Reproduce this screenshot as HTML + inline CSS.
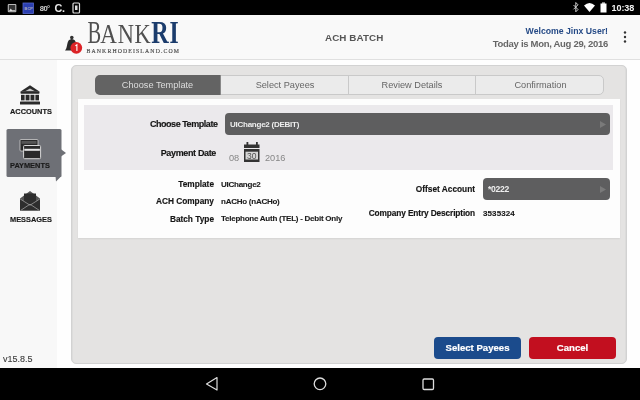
<!DOCTYPE html>
<html><head><meta charset="utf-8">
<style>
*{margin:0;padding:0;box-sizing:border-box}
html,body{width:640px;height:400px;overflow:hidden;will-change:transform;background:#fefefe;font-family:"Liberation Sans",sans-serif}
.abs{position:absolute}
#status{left:0;top:0;width:640px;height:15px;background:#000}
#header{left:0;top:15px;width:640px;height:45px;background:#f9f9f9;border-bottom:1px solid #e0e0e0}
#sidebar{left:0;top:60px;width:57px;height:308px;background:#f8f8f8}
#panel{left:71px;top:65px;width:556px;height:299px;background:#e4e3e2;border:1px solid #d2d2d2;border-radius:5px;box-shadow:inset 1px 0 0 #dcdcdb,inset -1px 0 0 #dcdcdb}
#nav{left:0;top:368px;width:640px;height:32px;background:#000}
.t{position:absolute;white-space:nowrap;line-height:1}
.lbl{font-weight:bold;font-size:8.3px;color:#151515;text-align:right;-webkit-text-stroke:0.15px #151515}
.val{font-weight:bold;font-size:8px;color:#1a1a1a;letter-spacing:-0.25px;-webkit-text-stroke:0.1px #1a1a1a}
.tabs{left:95px;top:75px;width:509px;height:20px;border:1px solid #c9c9c9;border-radius:5px;background:#ebebeb}
.tab{position:absolute;top:0;height:18px;font-size:9.2px;color:#666;text-align:center;line-height:18px;border-right:1px solid #c9c9c9}
.dd{position:absolute;background:#5e5e5f;border-radius:4px;color:#eee;font-weight:bold;font-size:8px}
.btn{position:absolute;top:337px;width:87px;height:22px;border-radius:4px;color:#fff;font-weight:bold;font-size:9.6px;text-align:center;line-height:22px;-webkit-text-stroke:0.2px #fff}
</style></head><body>
<div id="status" class="abs">
  <!-- left icons -->
  <svg class="abs" style="left:0;top:0" width="90" height="15">
    <rect x="8.3" y="4.5" width="7.5" height="7.3" rx="0.5" fill="#333" stroke="#b8b8b8" stroke-width="1.1"/>
    <path d="M8.8 11.3 L10.8 8.6 L12 10.2 L15.3 10.2 L15.3 11.3 Z" fill="#e0e0e0"/>
    <rect x="23" y="3" width="10.5" height="10.5" fill="#2b3fb0" stroke="#5566cc" stroke-width="0.8"/>
    <text x="24.5" y="10" font-size="4" fill="#aab" font-family="Liberation Sans" font-weight="bold">BCP</text>
    <text x="39.8" y="11.4" font-size="7.6" fill="#d0d0d0" font-family="Liberation Sans" font-weight="bold" letter-spacing="-0.6">80°</text>
    <text x="54.6" y="12.2" font-size="10.8" fill="#e8e8e8" font-family="Liberation Sans" font-weight="bold" letter-spacing="-0.3">C.</text>
    <rect x="73" y="3" width="6.5" height="10" rx="1" fill="none" stroke="#ddd" stroke-width="1.2"/>
    <rect x="75" y="5.5" width="2.5" height="4.5" fill="#ddd"/>
  </svg>
  <svg class="abs" style="left:560px;top:0" width="80" height="15">
    <path d="M13.5 5 L18 9.5 L15.8 11.8 L15.8 2.5 L18 4.8 L13.5 9.3" fill="none" stroke="#e0e0e0" stroke-width="0.9"/>
    <path d="M24 5.5 Q29.5 0.5 35 5.5 L29.5 12 Z" fill="#fff"/>
    <rect x="40.5" y="3.5" width="6" height="9" fill="#fff"/>
    <rect x="42" y="2.5" width="3" height="1.2" fill="#fff"/>
    <text x="51.6" y="11.3" font-size="9" fill="#f4f4f4" font-family="Liberation Sans" font-weight="bold" letter-spacing="-0.1">10:38</text>
  </svg>
</div>

<div id="header" class="abs">
  <!-- bell -->
  <svg class="abs" style="left:60px;top:17px" width="30" height="24">
    <circle cx="11.8" cy="5.6" r="1.8" fill="#333"/>
    <path d="M5 18.5 Q6.5 17 7.3 12 Q8 7.2 11.8 7 Q15.5 7.2 16.3 12 L16.8 18.5 Z" fill="#2a2a2a"/>
    <circle cx="16.3" cy="15.8" r="5.9" fill="#dc2327"/>
    <path d="M15.4 13.8 L16.9 12.8 L16.9 19" fill="none" stroke="#fff" stroke-width="1.1"/>
  </svg>
  <svg class="abs" style="left:80px;top:0" width="110" height="44" font-family="Liberation Serif">
    <g transform="translate(7.6,28) scale(0.66,1)"><text font-size="31" fill="#505050">B</text></g>
    <g transform="translate(20.2,28) scale(0.86,1)"><text font-size="26.7" fill="#505050">A</text></g>
    <g transform="translate(37.8,28) scale(0.84,1)"><text font-size="26.7" fill="#505050">N</text></g>
    <g transform="translate(54.4,28) scale(0.84,1)"><text font-size="26.7" fill="#505050">K</text></g>
    <g transform="translate(71.2,28) scale(0.76,1)"><text font-size="31.8" font-weight="bold" fill="#1b3c6c">R</text></g>
    <g transform="translate(89.4,28) scale(0.74,1)"><text font-size="31.8" font-weight="bold" fill="#1b3c6c">I</text></g>
  </svg>
  <div class="t" style="left:86.5px;top:33.5px;font-family:'Liberation Serif',serif;font-size:5.8px;color:#4a4a4a;letter-spacing:1.12px;-webkit-text-stroke:0.15px #4a4a4a">BANKRHODEISLAND.COM</div>
  <div class="t" style="left:325px;top:18px;font-size:9.8px;font-weight:bold;color:#555;letter-spacing:0.1px">ACH BATCH</div>
  <div class="t" style="right:32px;top:11.6px;font-size:8.7px;font-weight:bold;color:#254a86">Welcome Jinx User!</div>
  <div class="t" style="right:32px;top:24px;font-size:9.5px;font-weight:bold;color:#666;letter-spacing:-0.3px">Today is Mon, Aug 29, 2016</div>
  <svg class="abs" style="left:622px;top:16px" width="6" height="12">
    <circle cx="3" cy="1.5" r="1.2" fill="#333"/><circle cx="3" cy="6" r="1.2" fill="#333"/><circle cx="3" cy="10.5" r="1.2" fill="#333"/>
  </svg>
</div>

<div id="sidebar" class="abs"></div>
<!-- sidebar items -->
<svg class="abs" style="left:18px;top:84px" width="24" height="22">
  <path d="M12 1.3 L2.2 7.8 L21.8 7.8 Z" fill="#2a2a2a"/>
  <path d="M12 4.6 L7.5 7 L16.5 7 Z" fill="#c8c8c8"/>
  <rect x="2.5" y="7.5" width="19" height="2.3" rx="0.8" fill="#2a2a2a"/>
  <rect x="3" y="10.8" width="3.6" height="5.6" fill="#2a2a2a"/>
  <rect x="7.6" y="10.8" width="3.9" height="5.6" fill="#2a2a2a"/>
  <rect x="12.5" y="10.8" width="3.9" height="5.6" fill="#2a2a2a"/>
  <rect x="17.4" y="10.8" width="3.6" height="5.6" fill="#2a2a2a"/>
  <rect x="2" y="17.5" width="20" height="3" rx="0.5" fill="#2a2a2a"/>
</svg>
<div class="t" style="left:10px;top:108px;font-size:7.4px;font-weight:bold;color:#1a1a1a;-webkit-text-stroke:0.15px #1a1a1a">ACCOUNTS</div>

<svg class="abs" style="left:0;top:125px" width="70" height="60">
  <rect x="6.5" y="4" width="55" height="48" rx="1.5" fill="#6e7076"/>
  <path d="M55.5 51 L61.5 51 L56 56.5 Z" fill="#6e7076"/>
  <path d="M61 24.3 L66 28 L61 31.6 Z" fill="#6e7076"/>
  <!-- cards -->
  <rect x="20" y="14.5" width="18" height="11.5" rx="1" fill="#2a2a2a" stroke="#cfcfcf" stroke-width="0.8"/>
  <rect x="21.5" y="16" width="15" height="2.8" fill="#555"/>
  <rect x="23.6" y="20.5" width="17" height="13.2" rx="1" fill="#2a2a2a" stroke="#d8d8d8" stroke-width="1"/>
  <rect x="24.3" y="23.8" width="15.6" height="2" fill="#e8e8e8"/>
</svg>
<div class="t" style="left:10px;top:162px;font-size:7.4px;font-weight:bold;color:#1a1a1a;-webkit-text-stroke:0.15px #1a1a1a">PAYMENTS</div>

<svg class="abs" style="left:18px;top:189px" width="24" height="24">
  <path d="M2 9.5 L12 2 L22 9.5 L22 21.5 L2 21.5 Z" fill="#555"/>
  <rect x="6" y="4.5" width="12" height="11" fill="#2e2e2e"/>
  <path d="M2 9.8 L12 16.5 L22 9.8 L22 21.5 L2 21.5 Z" fill="#2e2e2e"/>
  <path d="M2.2 10 L12 16.2 L21.8 10" fill="none" stroke="#9a9a9a" stroke-width="0.8"/>
  <path d="M2.8 21.3 L12 15.2 L21.2 21.3" fill="none" stroke="#9a9a9a" stroke-width="0.8"/>
</svg>
<div class="t" style="left:10px;top:215.5px;font-size:7.4px;font-weight:bold;color:#1a1a1a;-webkit-text-stroke:0.15px #1a1a1a">MESSAGES</div>
<div class="t" style="left:3px;top:355px;font-size:9px;color:#3a3a3a;-webkit-text-stroke:0.1px #3a3a3a">v15.8.5</div>

<div id="panel" class="abs"></div>
<div class="abs tabs">
  <div class="tab" style="left:-1px;top:-1px;height:20px;width:126px;background:#636363;color:#ddd;line-height:21.5px;border-radius:5px 0 0 5px;border-right-color:#888">Choose Template</div>
  <div class="tab" style="left:126px;width:127px">Select Payees</div>
  <div class="tab" style="left:253px;width:127px">Review Details</div>
  <div class="tab" style="left:380px;width:129px;border-right:none">Confirmation</div>
</div>
<div class="abs" style="left:77.5px;top:98.5px;width:542.5px;height:139px;background:#fdfdfd;box-shadow:0 1px 1.5px rgba(0,0,0,0.07)"></div>
<div class="abs" style="left:84px;top:104.75px;width:529px;height:65.5px;background:#ebe9ec"></div>

<div class="t lbl" style="right:422.5px;top:119.5px;font-size:9px;letter-spacing:-0.45px">Choose Template</div>
<div class="dd" style="left:225px;top:112.5px;width:385px;height:22.5px;line-height:23px;padding-left:5px;letter-spacing:-0.25px">UIChange2 (DEBIT)</div>
<svg class="abs" style="left:599px;top:119.5px" width="8" height="9"><path d="M1 1 L7 4.5 L1 8 Z" fill="#7a7a7a"/></svg>

<div class="t lbl" style="right:424px;top:149px;font-size:9px;letter-spacing:-0.35px">Payment Date</div>
<div class="t" style="left:229px;top:153.5px;font-size:9.2px;color:#868686">08</div>
<svg class="abs" style="left:243px;top:141px" width="18" height="22">
  <rect x="1" y="3.5" width="15.5" height="3.5" fill="#333"/>
  <rect x="3.5" y="1" width="1.8" height="4" fill="#333"/>
  <rect x="13" y="1" width="1.8" height="4" fill="#333"/>
  <rect x="1" y="8" width="15.5" height="13" fill="#333"/>
  <rect x="2.5" y="10.7" width="12.5" height="7.8" fill="#d6d6d6"/>
  <text x="8.75" y="18" font-size="8.5" fill="#505050" font-family="Liberation Sans" text-anchor="middle">30</text>
</svg>
<div class="t" style="left:265px;top:153.5px;font-size:9.2px;color:#868686">2016</div>

<div class="t lbl" style="right:426px;top:179.5px">Template</div>
<div class="t val" style="left:221px;top:180.5px">UIChange2</div>
<div class="t lbl" style="right:426px;top:197px">ACH Company</div>
<div class="t val" style="left:221px;top:197.5px">nACHo (nACHo)</div>
<div class="t lbl" style="right:426px;top:214.5px">Batch Type</div>
<div class="t val" style="left:221px;top:215px">Telephone Auth (TEL) - Debit Only</div>

<div class="t lbl" style="right:165px;top:184.8px">Offset Account</div>
<div class="dd" style="left:483px;top:178px;width:127px;height:22px;line-height:22px;padding-left:5px;font-weight:bold;font-size:8.6px;letter-spacing:-0.3px">*0222</div>
<svg class="abs" style="left:599px;top:185px" width="8" height="9"><path d="M1 1 L7 4.5 L1 8 Z" fill="#7a7a7a"/></svg>
<div class="t lbl" style="right:165px;top:209px;letter-spacing:-0.12px">Company Entry Description</div>
<div class="t val" style="left:483px;top:209.5px;letter-spacing:0.1px">3535324</div>

<div class="btn" style="left:434px;background:#1b4b8c">Select Payees</div>
<div class="btn" style="left:529px;background:#c20f1f">Cancel</div>

<div id="nav" class="abs">
  <svg width="640" height="32">
    <path d="M217 9.5 L206.5 16 L217 22 Z" fill="none" stroke="#ddd" stroke-width="1.2" stroke-linejoin="round"/>
    <circle cx="320" cy="15.8" r="5.8" fill="none" stroke="#ddd" stroke-width="1.3"/>
    <rect x="423" y="11" width="10.5" height="10.5" rx="1.2" fill="none" stroke="#ddd" stroke-width="1.3"/>
  </svg>
</div>
</body></html>
